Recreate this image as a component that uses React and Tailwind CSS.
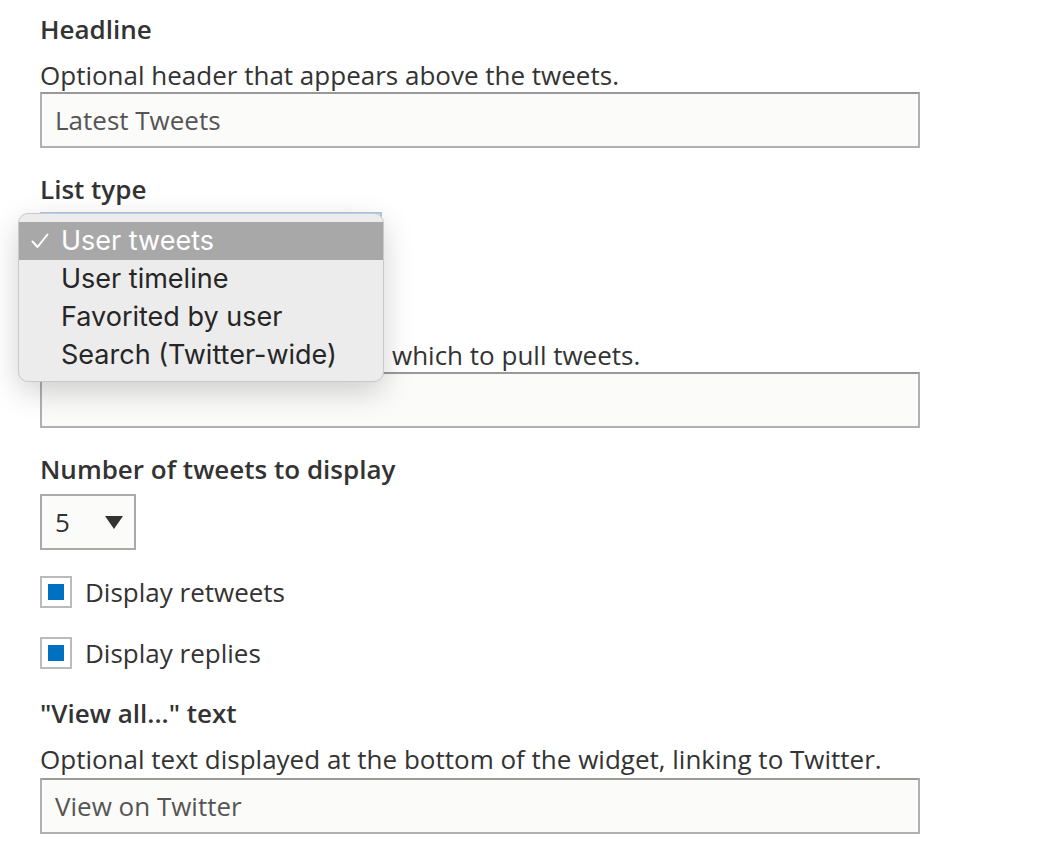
import React from 'react'

const font = { fontFamily: '"Open Sans", "Noto Sans", sans-serif' }

function Label({ children, className = '' }) {
  return <div className={`h-8 leading-8 text-[26px] font-semibold text-[#333] whitespace-nowrap ${className}`}>{children}</div>
}

function Desc({ children, className = '' }) {
  return <div className={`h-8 leading-8 text-[26px] text-[#333] whitespace-nowrap ${className}`}>{children}</div>
}

function TextInput({ value, className = '' }) {
  return (
    <div className={`w-[880px] h-[56px] bg-[#fbfbfa] border-2 border-[#b0b0b0] border-t-[#999] flex items-center px-[13px] text-[26px] text-[#555] ${className}`}>
      {value}
    </div>
  )
}

function Checkbox({ label, className = '' }) {
  return (
    <div className={`flex items-center gap-[13px] ${className}`}>
      <div className="w-8 h-8 border-2 border-[#bbb] bg-white flex items-center justify-center">
        <div className="w-4 h-4 bg-[#0071c1]" />
      </div>
      <span className="text-[26px] leading-8 text-[#333]">{label}</span>
    </div>
  )
}

const OPTIONS = ['User tweets', 'User timeline', 'Favorited by user', 'Search (Twitter-wide)']

export default function App() {
  return (
    <div className="relative w-[1040px] h-[848px] bg-white overflow-hidden" style={font}>
      <div className="pl-[40px] pt-[13px]">
        <Label>Headline</Label>
        <Desc className="mt-[14px]">Optional header that appears above the tweets.</Desc>
        <TextInput className="mt-[1px]" value="Latest Tweets" />

        <Label className="mt-[25px]">List type</Label>
        <div className="mt-[7px] w-[342px] h-[56px] bg-[#fbfbfa] border-2 border-[#a9c9ef]" />

        <Label className="mt-[25px]">Twitter user</Label>
        <Desc className="mt-[14px]">
          <span className="inline-block w-[352px]">The Twitter user from</span>which to pull tweets.
        </Desc>
        <TextInput className="mt-[1px]" value="" />

        <Label className="mt-[25px]">Number of tweets to display</Label>
        <div className="mt-[9px] w-[96px] h-[56px] bg-[#fbfbfa] border-2 border-[#aaa] flex items-center justify-between pl-[13px] pr-[11px] text-[26px] text-[#333]">
          <span>5</span>
          <svg width="18" height="14" viewBox="0 0 18 14"><path d="M0 1 H18 L9 14 Z" fill="#333" /></svg>
        </div>

        <Checkbox className="mt-[26px]" label="Display retweets" />
        <Checkbox className="mt-[29px]" label="Display replies" />

        <Label className="mt-[28px]">"View all..." text</Label>
        <Desc className="mt-[14px]">Optional text displayed at the bottom of the widget, linking to Twitter.</Desc>
        <TextInput className="mt-[3px]" value="View on Twitter" />
      </div>

      <div
        className="absolute left-[18px] top-[213px] w-[366px] h-[169px] rounded-[10px] bg-[#ececec] border border-[#c9c9c9] shadow-[0_10px_30px_rgba(0,0,0,0.18)] pt-[8px]"
        style={{ fontFamily: 'Inter, Roboto, sans-serif' }}
      >
        {OPTIONS.map((o, i) => (
          <div
            key={o}
            className={`h-[38px] flex items-center text-[27px] ${i === 0 ? 'bg-[#a8a8a8] text-white' : 'text-[#262626]'}`}
          >
            <span className="w-[42px] pl-[12px] flex items-center">
              {i === 0 && (
                <svg width="18" height="16" viewBox="0 0 18 16">
                  <path d="M1.5 8.5 L6.5 14 L16.5 1.5" fill="none" stroke="white" strokeWidth="2" strokeLinecap="round" strokeLinejoin="round" />
                </svg>
              )}
            </span>
            <span>{o}</span>
          </div>
        ))}
      </div>
    </div>
  )
}
